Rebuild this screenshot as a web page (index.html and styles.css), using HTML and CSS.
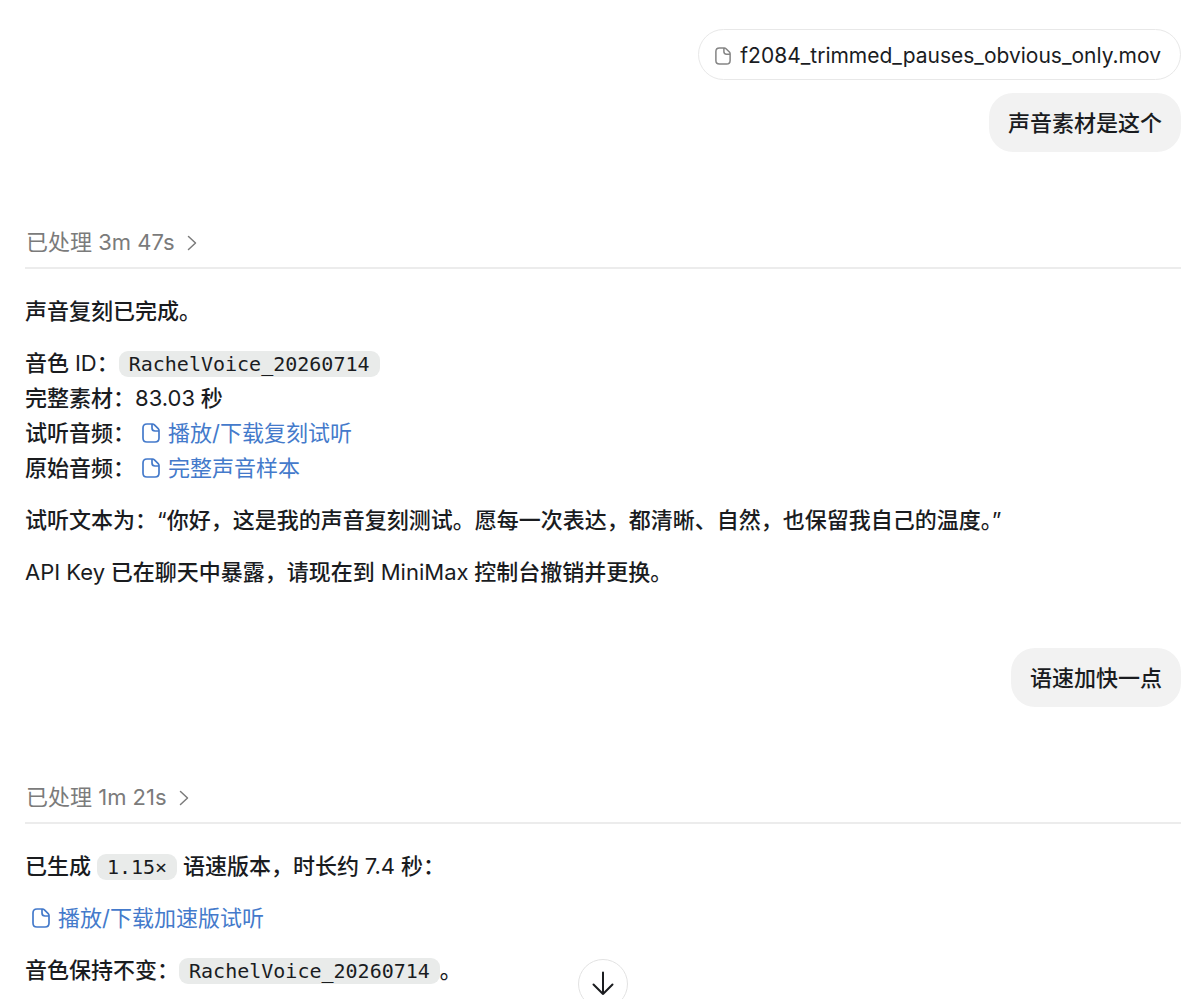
FILE: index.html
```html
<!DOCTYPE html>
<html lang="zh-CN">
<head>
<meta charset="utf-8">
<meta name="viewport" content="width=device-width, initial-scale=1">
<title>声音复刻</title>
<link rel="stylesheet" href="styles.css">
</head>
<body>
<svg class="sprite" aria-hidden="true">
  <symbol id="file" viewBox="0 0 18 20">
    <path d="M5 1H10.500Q11.600 1 12.400 1.800L16.200 5.600Q17 6.400 17 7.500V15Q17 19 13 19H5Q1 19 1 15V5Q1 1 5 1ZM10 1.200V5Q10 8 13 8H16.800"/>
  </symbol>
  <symbol id="chevron" viewBox="0 0 10 16">
    <path d="M1.500 1.500L8.500 8L1.500 14.500"/>
  </symbol>
</svg>
<main class="thread">
  <section class="user">
    <button class="attachment" type="button"><svg class="file-icon small"><use href="#file"/></svg>f2084_trimmed_pauses_obvious_only.mov</button>
    <p class="bubble">声音素材是这个</p>
  </section>

  <section class="reply">
    <button class="status" type="button">已处理 3m 47s<svg class="chevron"><use href="#chevron"/></svg></button>
    <div class="answer">
      <p>声音复刻已完成。</p>
      <p>音色 <span class="latin">ID</span>：<code>RachelVoice_20260714</code><br>
        完整素材：<span class="latin">83.03</span> 秒<br>
        试听音频：<a class="file-link" href="#"><svg class="file-icon"><use href="#file"/></svg>播放/下载复刻试听</a><br>
        原始音频：<a class="file-link" href="#"><svg class="file-icon"><use href="#file"/></svg>完整声音样本</a></p>
      <p>试听文本为：<span class="latin">“</span>你好，这是我的声音复刻测试。愿每一次表达，都清晰、自然，也保留我自己的温度<span class="half">。</span><span class="latin">”</span></p>
      <p><span class="latin">API Key</span> 已在聊天中暴露，请现在到 <span class="latin">MiniMax</span> 控制台撤销并更换。</p>
    </div>
  </section>

  <section class="user">
    <p class="bubble">语速加快一点</p>
  </section>

  <section class="reply">
    <button class="status" type="button">已处理 1m 21s<svg class="chevron"><use href="#chevron"/></svg></button>
    <div class="answer">
      <p>已生成 <code>1.15×</code> 语速版本，时长约 <span class="latin">7.4</span> 秒：</p>
      <p><a class="file-link" href="#"><svg class="file-icon"><use href="#file"/></svg>播放/下载加速版试听</a></p>
      <p>音色保持不变：<code>RachelVoice_20260714</code>。</p>
    </div>
  </section>
</main>
<div class="jump">
  <button class="jump-button" type="button" aria-label="滚动到底部">
    <svg width="24" height="26" viewBox="0 0 24 26"><path d="M12 1.500V23M2.500 13.500L12 23L21.500 13.500"/></svg>
  </button>
</div>
</body>
</html>
```
FILE: styles.css
```css
* {
  box-sizing: border-box;
}

body {
  margin: 0;
  background: #fff;
  color: #1a1c1f;
  font: 400 22px/35px Inter, "Noto Sans CJK SC", sans-serif;
}

p {
  margin: 0;
}

button {
  font: inherit;
  color: inherit;
  cursor: pointer;
}

svg {
  fill: none;
  stroke: currentColor;
  stroke-linecap: round;
  stroke-linejoin: round;
}

.sprite {
  position: absolute;
  width: 0;
  height: 0;
}

.thread {
  padding: 29px 19px 10px 25px;
}

.user {
  display: flex;
  flex-direction: column;
  align-items: flex-end;
  gap: 13px;
}

.attachment {
  display: flex;
  align-items: center;
  gap: 9px;
  padding: 8px 19px 6px 16px;
  border: 1px solid #e8e8e8;
  border-radius: 26px;
  background: #fff;
  font-size: 21px;
}

.bubble {
  padding: 13px 19px 11px;
  border-radius: 24px;
  background: #f2f2f2;
  font-weight: 500;
}

.reply {
  padding: 73px 0 58px;
}

.reply:last-child {
  padding-bottom: 0;
}

.status {
  display: flex;
  align-items: center;
  gap: 12px;
  width: 100%;
  padding: 0 1px 7px;
  border: 0;
  border-bottom: 2px solid #ececec;
  background: none;
  color: #7b7b7b;
}

.chevron {
  width: 10px;
  height: 16px;
  stroke-width: 1.500;
}

.answer {
  display: flex;
  flex-direction: column;
  gap: 17px;
  padding-top: 25px;
  font-weight: 500;
}

.latin {
  font-weight: 400;
}

code {
  padding: 1px 10px;
  border-radius: 9px;
  background: #e9ebea;
  font: 20px/25px "DejaVu Sans Mono", monospace;
}

.half {
  font-feature-settings: "halt";
}

.file-link {
  padding-left: 7px;
  color: #447acb;
  font-weight: 400;
  text-decoration: none;
}

.file-icon {
  width: 18px;
  height: 20px;
  margin-right: 8px;
  vertical-align: -2px;
  stroke-width: 1.700;
}

.file-icon.small {
  width: 16px;
  height: 18px;
  margin: 0;
  color: #858585;
}

.jump {
  position: fixed;
  right: 19px;
  bottom: -10px;
  left: 25px;
  display: flex;
  justify-content: center;
  pointer-events: none;
}

.jump-button {
  display: grid;
  place-items: center;
  width: 50px;
  height: 50px;
  padding: 0;
  border: 1px solid #e2e2e2;
  border-radius: 50%;
  background: #fff;
  pointer-events: auto;
  stroke-width: 2;
}
```
